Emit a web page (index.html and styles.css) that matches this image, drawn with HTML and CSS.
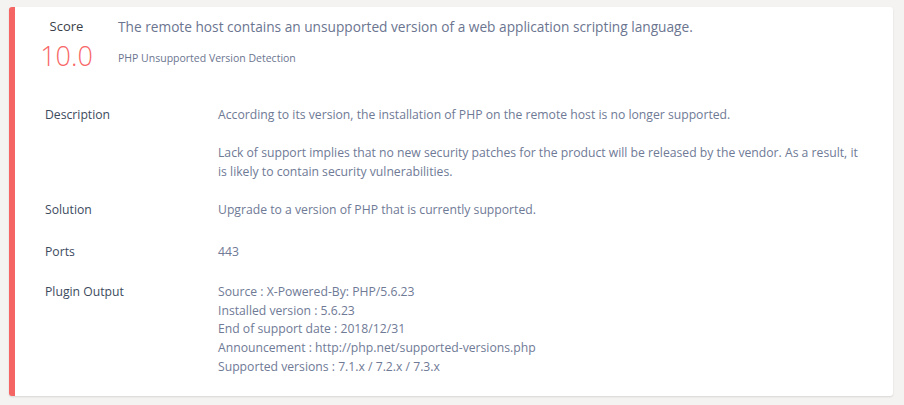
FILE: index.html
```html
<!DOCTYPE html>
<html>
<head>
<meta charset="utf-8">
<link rel="stylesheet" href="styles.css">
</head>
<body>
<div class="card">
  <div class="header">
    <div class="score">
      <div class="score-label">Score</div>
      <div class="score-value">10.0</div>
    </div>
    <div class="heading">
      <div class="title">The remote host contains an unsupported version of a web application scripting language.</div>
      <div class="subtitle">PHP Unsupported Version Detection</div>
    </div>
  </div>
  <div class="details">
    <div class="label row-desc">Description</div>
    <div class="value row-desc">
      <p>According to its version, the installation of PHP on the remote host is no longer supported.</p>
      <p>Lack of support implies that no new security patches for the product will be released by the vendor. As a result, it is likely to contain security vulnerabilities.</p>
    </div>
    <div class="label">Solution</div>
    <div class="value"><p>Upgrade to a version of PHP that is currently supported.</p></div>
    <div class="label row-ports">Ports</div>
    <div class="value row-ports"><p>443</p></div>
    <div class="label">Plugin Output</div>
    <div class="value output">Source : X-Powered-By: PHP/5.6.23<br>Installed version : 5.6.23<br>End of support date : 2018/12/31<br>Announcement : http://php.net/supported-versions.php<br>Supported versions : 7.1.x / 7.2.x / 7.3.x</div>
  </div>
</div>
</body>
</html>
```
FILE: styles.css
```css
html, body {
  margin: 0;
  padding: 0;
  background: #f4f3f2;
}
body {
  padding: 7px 11px 9px 9px;
  font-family: "Open Sans", "Noto Sans", sans-serif;
}
.card {
  background: #fff;
  border-left: 6px solid #f46564;
  border-radius: 3px;
  box-shadow: 0 1px 2px rgba(0,0,0,0.12);
  height: 389px;
  box-sizing: border-box;
  padding: 9px 0 0 0;
}
.header {
  display: flex;
  align-items: flex-start;
}
.score {
  width: 103px;
  text-align: center;
}
.score-label {
  font-size: 13px;
  color: #3a3f4a;
  line-height: 20px;
}
.score-value {
  font-size: 27px;
  color: #f86868;
  line-height: 34px;
  margin-top: 3px;
  font-weight: 300;
}
.heading {
  padding-top: 1px;
}
.title {
  font-size: 13.7px;
  color: #6b7590;
  line-height: 20px;
}
.subtitle {
  font-size: 10.5px;
  color: #6b7590;
  margin-top: 13px;
  line-height: 16px;
}
.details {
  display: grid;
  grid-template-columns: 173px 1fr;
  padding: 33px 20px 0 30px;
  font-size: 12.2px;
  line-height: 18.75px;
}
.label {
  color: #3c4a5e;
  margin-bottom: 19px;
}
.value {
  color: #6f7a96;
  margin-bottom: 19px;
  max-width: 650px;
}
.row-desc {
  margin-bottom: 20px;
}
.row-ports {
  margin-top: 4px;
  margin-bottom: 21px;
}
.value p {
  margin: 0 0 19px 0;
}
.value p:last-child {
  margin-bottom: 0;
}
```
